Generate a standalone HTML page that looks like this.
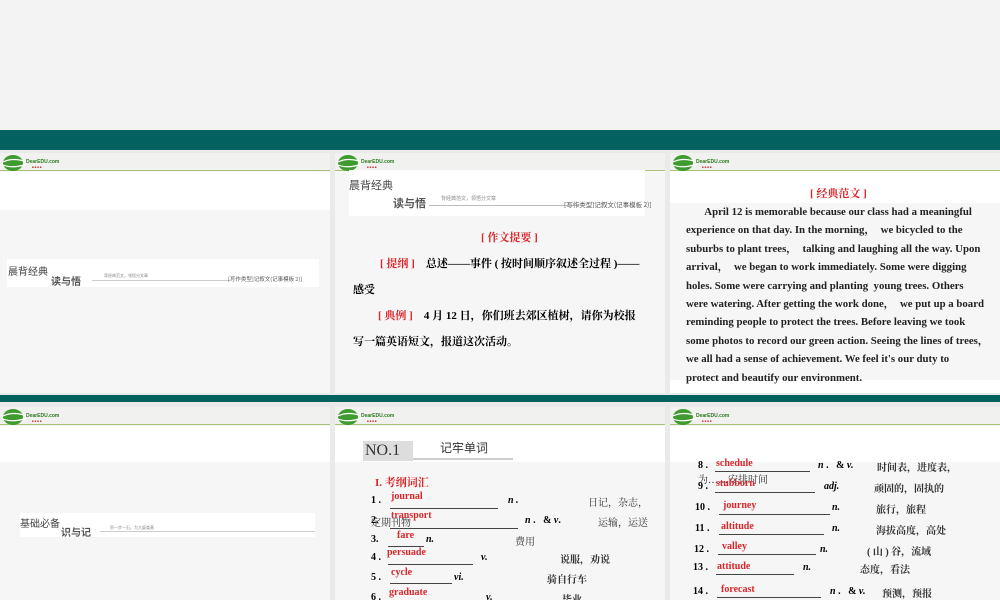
<!DOCTYPE html>
<html><head><meta charset="utf-8"><style>
*{margin:0;padding:0;box-sizing:border-box}
body{width:1000px;height:600px;position:relative;overflow:hidden;background:#e9eaea;font-family:"Liberation Serif","Noto Serif CJK SC",serif}
.a{position:absolute}
.top{left:0;top:0;width:1000px;height:130px;background:#f3f3f3}
.teal{background:#03625f}
.slide{background:#f6f6f6;overflow:hidden}
.hdr{position:absolute;left:0;top:0;width:100%;height:18px;background:#f1f1ef;border-bottom:1px solid #a9c27a}
.wht{position:absolute;left:0;top:19px;width:100%;background:#fff}
.logo{position:absolute;left:2px;top:2px;width:160px;height:16px}
.t{position:absolute;white-space:nowrap}
.red{color:#d9262b}
.bd{font-weight:bold}
.ul{position:absolute;border-bottom:1px solid #444}
.banner{position:absolute;background:#fff}
</style></head><body>
<div class="a top"></div>
<div class="a teal" style="left:0;top:130px;width:1000px;height:20px"></div>
<div class="a teal" style="left:0;top:395px;width:1000px;height:7px"></div>

<svg width="0" height="0" style="position:absolute"><defs>
<g id="lg"><ellipse cx="11" cy="8" rx="10" ry="8" fill="#3f9b2f"/><path d="M1 7 Q11 2 25 7 M1 10 Q11 14 25 9" stroke="#fff" stroke-width="1.2" fill="none"/><text x="24" y="8" font-size="5" fill="#2c7a1f" font-family="Liberation Sans" font-weight="bold">DearEDU.com</text><text x="30" y="13" font-size="3" fill="#c33" font-family="Liberation Sans">■ ■ ■ ■</text></g></defs></svg>

<!-- slide 1 -->
<div class="a slide" style="left:0;top:153px;width:330px;height:240px">
<div class="hdr"><svg class="logo"><use href="#lg"/></svg></div>
<div class="wht" style="height:38px"></div>
<div class="banner" style="left:7px;top:106px;width:312px;height:28px">
<div class="t" style="left:1px;top:4px;font-size:10px;color:#444;font-family:'Noto Sans CJK SC',sans-serif">晨背经典</div>
<div class="t" style="left:44px;top:14px;font-size:10px;color:#555;font-family:'Noto Sans CJK SC',sans-serif;font-weight:bold">读与悟</div>
<div class="t" style="left:97px;top:14px;font-size:4px;color:#888;font-family:sans-serif">背经典范文，领悟分文章</div>
<div class="a" style="left:85px;top:21px;width:140px;border-top:1px solid #ccc"></div>
<div class="t" style="left:221px;top:16px;font-size:5.5px;color:#555;font-family:'Noto Sans CJK SC',sans-serif">[写作类型]记叙文(记事模板 2)]</div>
</div></div>

<!-- slide 2 -->
<div class="a slide" style="left:335px;top:153px;width:330px;height:240px">
<div class="hdr"><svg class="logo"><use href="#lg"/></svg></div>
<div class="banner" style="left:14px;top:17px;width:296px;height:46px">
<div class="t" style="left:0;top:7px;font-size:11px;color:#444;font-family:'Noto Sans CJK SC',sans-serif">晨背经典</div>
<div class="t" style="left:44px;top:25px;font-size:11px;color:#555;font-family:'Noto Sans CJK SC',sans-serif;font-weight:bold">读与悟</div>
<div class="t" style="left:92px;top:25px;font-size:5px;color:#888;font-family:sans-serif">背经典范文，领悟分文章</div>
<div class="a" style="left:80px;top:35px;width:150px;border-top:1px solid #bbb"></div>
<div class="t" style="left:215px;top:29px;font-size:6.5px;color:#555;font-family:'Noto Sans CJK SC',sans-serif">[写作类型]记叙文(记事模板 2)]</div>
</div>
<div class="t red bd" style="left:146px;top:76px;font-size:11px">[ 作文提要 ]</div>
<div class="t bd" style="left:45px;top:102px;font-size:11px"><span class="red">[ 提纲 ]</span>&nbsp;&nbsp;&nbsp;&nbsp;总述——事件 ( 按时间顺序叙述全过程 )——</div>
<div class="t bd" style="left:18px;top:128px;font-size:11px">感受</div>
<div class="t bd" style="left:43px;top:154px;font-size:11px"><span class="red">[ 典例 ]</span>&nbsp;&nbsp;&nbsp;&nbsp;4 月 12 日，你们班去郊区植树，请你为校报</div>
<div class="t bd" style="left:18px;top:180px;font-size:11px">写一篇英语短文，报道这次活动。</div>
</div>

<!-- slide 3 -->
<div class="a slide" style="left:670px;top:153px;width:330px;height:240px;background:#fff">
<div class="hdr"><svg class="logo"><use href="#lg"/></svg></div>
<div class="a" style="left:0;top:50px;width:330px;height:177px;background:#f6f6f6"></div>
<div class="t red bd" style="left:140px;top:32px;font-size:11px">[ 经典范文 ]</div>
<div class="t bd" style="left:16px;top:50px;font-size:10.8px;line-height:18.4px;color:#222;white-space:pre">       April 12 is memorable because our class had a meaningful
experience on that day. In the morning，  we bicycled to the
suburbs to plant trees，  talking and laughing all the way. Upon
arrival，  we began to work immediately. Some were digging
holes. Some were carrying and planting  young trees. Others
were watering. After getting the work done，  we put up a board
reminding people to protect the trees. Before leaving we took
some photos to record our green action. Seeing the lines of trees，
we all had a sense of achievement. We feel it's our duty to
protect and beautify our environment.</div>
</div>

<!-- slide 4 -->
<div class="a slide" style="left:0;top:407px;width:330px;height:193px">
<div class="hdr"><svg class="logo"><use href="#lg"/></svg></div>
<div class="wht" style="height:36px"></div>
<div class="banner" style="left:20px;top:106px;width:295px;height:24px">
<div class="t" style="left:0;top:2px;font-size:10px;color:#444;font-family:'Noto Sans CJK SC',sans-serif">基础必备</div>
<div class="t" style="left:41px;top:11px;font-size:10px;color:#555;font-family:'Noto Sans CJK SC',sans-serif;font-weight:bold">识与记</div>
<div class="t" style="left:90px;top:12px;font-size:4px;color:#888;font-family:sans-serif">积一步一石，为大厦奠基</div>
<div class="a" style="left:80px;top:18px;width:215px;border-top:1px solid #ccc"></div>
</div></div>

<!-- slide 5 -->
<div class="a slide" style="left:335px;top:407px;width:330px;height:193px">
<div class="hdr"><svg class="logo"><use href="#lg"/></svg></div>
<div class="wht" style="height:36px"></div>
<div class="a" style="left:28px;top:34px;width:50px;height:20px;background:#ddd"></div>
<div class="t" style="left:30px;top:35px;font-size:16px;color:#333">NO.1</div>
<div class="a" style="left:78px;top:51px;width:100px;border-top:2px solid #ccc"></div>
<div class="t" style="left:105px;top:32px;font-size:12px;color:#333;font-family:'Noto Sans CJK SC',sans-serif">记牢单词</div>
<div class="t red bd" style="left:40px;top:67px;font-size:11px">I. 考纲词汇</div>
<div class="t bd" style="left:36px;top:88px;font-size:10px">1 .</div><div class="ul" style="left:55px;top:101px;width:108px"></div><div class="t red bd" style="left:56px;top:84px;font-size:10px">journal</div><div class="t bd" style="left:173px;top:88px;font-size:10px;font-style:italic">n .</div><div class="t" style="left:253px;top:87px;font-size:10px;color:#333">日记，杂志，</div>
<div class="t" style="left:36px;top:107px;font-size:10px;color:#333">定期刊物</div><div class="t bd" style="left:36px;top:108px;font-size:10px">2.</div><div class="ul" style="left:55px;top:121px;width:128px"></div><div class="t red bd" style="left:56px;top:103px;font-size:10px">transport</div><div class="t bd" style="left:190px;top:108px;font-size:10px"><i>n</i> .&nbsp;&nbsp; &amp; <i>v</i>.</div><div class="t" style="left:263px;top:107px;font-size:10px;color:#333">运输，运送</div>
<div class="t bd" style="left:36px;top:127px;font-size:10px">3.</div><div class="ul" style="left:53px;top:139px;width:36px"></div><div class="t red bd" style="left:62px;top:123px;font-size:10px">fare</div><div class="t bd" style="left:91px;top:127px;font-size:10px;font-style:italic">n.</div><div class="t" style="left:180px;top:126px;font-size:10px;color:#333">费用</div>
<div class="t bd" style="left:36px;top:145px;font-size:10px">4 .</div><div class="ul" style="left:53px;top:157px;width:85px"></div><div class="t red bd" style="left:52px;top:140px;font-size:10px">persuade</div><div class="t bd" style="left:146px;top:145px;font-size:10px;font-style:italic">v.</div><div class="t bd" style="left:225px;top:144px;font-size:10px;color:#333">说服，劝说</div>
<div class="t bd" style="left:36px;top:165px;font-size:10px">5 .</div><div class="ul" style="left:55px;top:176px;width:62px"></div><div class="t red bd" style="left:56px;top:160px;font-size:10px">cycle</div><div class="t bd" style="left:119px;top:165px;font-size:10px;font-style:italic">vi.</div><div class="t bd" style="left:212px;top:164px;font-size:10px;color:#333">骑自行车</div>
<div class="t bd" style="left:36px;top:185px;font-size:10px">6 .</div><div class="t red bd" style="left:54px;top:180px;font-size:10px">graduate</div><div class="t bd" style="left:151px;top:185px;font-size:10px;font-style:italic">v.</div><div class="t bd" style="left:227px;top:184px;font-size:10px;color:#333">毕业</div>
</div>

<!-- slide 6 -->
<div class="a slide" style="left:670px;top:407px;width:330px;height:193px">
<div class="hdr"><svg class="logo"><use href="#lg"/></svg></div>
<div class="wht" style="height:36px"></div>
<div class="t bd" style="left:28px;top:53px;font-size:10px">8 .</div><div class="ul" style="left:45px;top:64px;width:95px"></div><div class="t red bd" style="left:46px;top:51px;font-size:10px">schedule</div><div class="t bd" style="left:148px;top:53px;font-size:10px"><i>n</i> .&nbsp;&nbsp; &amp; <i>v.</i></div><div class="t bd" style="left:207px;top:52px;font-size:10px;color:#333">时间表，进度表，</div>
<div class="t" style="left:28px;top:64px;font-size:10px;color:#333">为……安排时间</div>
<div class="t bd" style="left:28px;top:74px;font-size:10px">9 .</div><div class="ul" style="left:45px;top:85px;width:100px"></div><div class="t red bd" style="left:46px;top:71px;font-size:10px">stubborn</div><div class="t bd" style="left:154px;top:74px;font-size:10px;font-style:italic">adj.</div><div class="t bd" style="left:204px;top:73px;font-size:10px;color:#333">顽固的，固执的</div>
<div class="t bd" style="left:25px;top:95px;font-size:10px">10 .</div><div class="ul" style="left:49px;top:107px;width:111px"></div><div class="t red bd" style="left:53px;top:93px;font-size:10px">journey</div><div class="t bd" style="left:162px;top:95px;font-size:10px;font-style:italic">n.</div><div class="t bd" style="left:206px;top:94px;font-size:10px;color:#333">旅行，旅程</div>
<div class="t bd" style="left:25px;top:116px;font-size:10px">11 .</div><div class="ul" style="left:49px;top:127px;width:105px"></div><div class="t red bd" style="left:51px;top:114px;font-size:10px">altitude</div><div class="t bd" style="left:162px;top:116px;font-size:10px;font-style:italic">n.</div><div class="t bd" style="left:206px;top:115px;font-size:10px;color:#333">海拔高度，高处</div>
<div class="t bd" style="left:24px;top:137px;font-size:10px">12 .</div><div class="ul" style="left:48px;top:147px;width:98px"></div><div class="t red bd" style="left:52px;top:134px;font-size:10px">valley</div><div class="t bd" style="left:150px;top:137px;font-size:10px;font-style:italic">n.</div><div class="t bd" style="left:197px;top:136px;font-size:10px;color:#333">( 山 ) 谷，流域</div>
<div class="t bd" style="left:23px;top:155px;font-size:10px">13 .</div><div class="ul" style="left:46px;top:167px;width:78px"></div><div class="t red bd" style="left:47px;top:154px;font-size:10px">attitude</div><div class="t bd" style="left:133px;top:155px;font-size:10px;font-style:italic">n.</div><div class="t bd" style="left:190px;top:154px;font-size:10px;color:#333">态度，看法</div>
<div class="t bd" style="left:23px;top:179px;font-size:10px">14 .</div><div class="ul" style="left:47px;top:190px;width:104px"></div><div class="t red bd" style="left:51px;top:177px;font-size:10px">forecast</div><div class="t bd" style="left:160px;top:179px;font-size:10px"><i>n</i> .&nbsp;&nbsp; &amp; <i>v.</i></div><div class="t bd" style="left:212px;top:178px;font-size:10px;color:#333">预测，预报</div>
</div>
</body></html>
